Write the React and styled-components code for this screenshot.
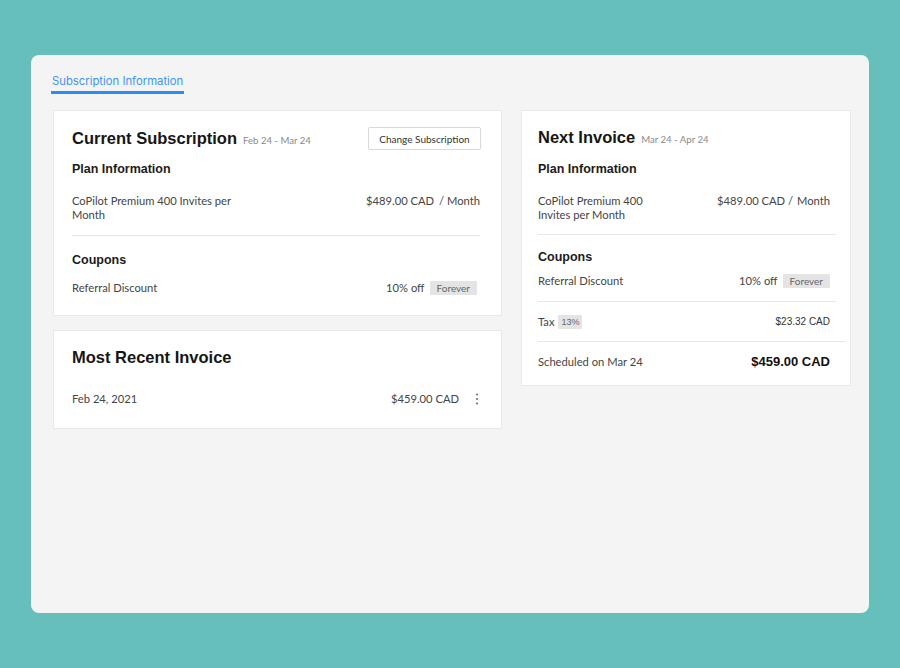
import React from "react";
import styled, { createGlobalStyle } from "styled-components";

const Global = createGlobalStyle`
  html, body { margin: 0; padding: 0; }
  body {
    background: #66bfba;
    font-family: Lato, "Open Sans", sans-serif;
    color: #3c3c3c;
    -webkit-font-smoothing: antialiased;
  }
`;

const Page = styled.div`
  width: 900px;
  height: 668px;
  box-sizing: border-box;
  padding: 55px 31px;
`;

const Panel = styled.div`
  height: 558px;
  box-sizing: border-box;
  background: #f4f4f4;
  border-radius: 8px;
  padding: 20px 18px 0 22px;
`;

const Tabs = styled.div`
  display: flex;
  margin-left: -2px;
  height: 20px;
`;

const Tab = styled.div`
  font-family: Inter, "Liberation Sans", Arial, sans-serif;
  font-size: 11.3px;
  color: #3d94f6;
  line-height: 13px;
  height: 16px;
  border-bottom: 3px solid #2a8cf6;
  padding: 0 1px;
`;

const Grid = styled.div`
  display: grid;
  grid-template-columns: 449px 330px;
  column-gap: 19px;
  align-items: start;
  margin-top: 15px;
`;

const Column = styled.div`
  display: flex;
  flex-direction: column;
  gap: 14px;
`;

const Card = styled.div`
  background: #fff;
  border: 1px solid #e9e9e9;
  box-sizing: border-box;
  padding: ${(p) => p.$pad};
`;

const Header = styled.div`
  display: flex;
  align-items: center;
  justify-content: space-between;
  height: ${(p) => p.$h || 23}px;
`;

const TitleGroup = styled.div`
  display: flex;
  align-items: baseline;
  gap: 6px;
`;

const Title = styled.h2`
  margin: 0;
  font-family: "Liberation Sans", Arial, sans-serif;
  font-weight: 700;
  font-size: 16.5px;
  color: #161616;
`;

const Dates = styled.span`
  font-size: 9.6px;
  color: #8a8a8a;
`;

const Button = styled.button`
  font-family: Lato, sans-serif;
  font-size: 10px;
  color: #333;
  background: #fff;
  border: 1px solid #d9d9d9;
  border-radius: 2px;
  height: 23px;
  width: 113px;
  padding: 0;
  margin-right: -1px;
`;

const Section = styled.h3`
  margin: ${(p) => p.$mt}px 0 0;
  font-family: "Liberation Sans", Arial, sans-serif;
  font-weight: 700;
  font-size: 12.5px;
  line-height: 16px;
  color: #1c1c1c;
`;

const Row = styled.div`
  display: flex;
  justify-content: space-between;
  align-items: ${(p) => p.$align || "center"};
  margin-top: ${(p) => p.$mt}px;
  font-size: 11.2px;
  line-height: 13.5px;
  color: #454545;
`;

const Desc = styled.div`
  max-width: ${(p) => p.$w}px;
`;

const Right = styled.div`
  display: flex;
  align-items: center;
  gap: ${(p) => p.$gap || 4}px;
  white-space: nowrap;
`;

const Badge = styled.span`
  background: #e4e4e4;
  color: #666;
  font-size: ${(p) => p.$fs || 10}px;
  line-height: 14px;
  padding: 0 ${(p) => p.$px || 6}px;
  margin-right: ${(p) => p.$mr || 0}px;
  border-radius: 1px;
  font-family: ${(p) => (p.$sans ? '"Liberation Sans", Arial, sans-serif' : "Lato, sans-serif")};
`;

const Divider = styled.hr`
  border: none;
  border-top: 1px solid #e6e6e6;
  margin: ${(p) => p.$mt}px ${(p) => p.$mr || 0}px 0 0;
`;

const SansVal = styled.span`
  font-family: "Liberation Sans", Arial, sans-serif;
  font-size: ${(p) => p.$fs || 10}px;
  font-weight: ${(p) => (p.$bold ? 700 : 400)};
  color: ${(p) => (p.$bold ? "#111" : "#333")};
`;

const Kebab = styled.svg`
  margin-left: 12px;
  margin-right: 1px;
`;

export default function App() {
  return (
    <>
      <Global />
      <Page>
        <Panel>
          <Tabs>
            <Tab>Subscription Information</Tab>
          </Tabs>
          <Grid>
            <Column>
              <Card $pad="16px 21px 20px 18px">
                <Header>
                  <TitleGroup>
                    <Title>Current Subscription</Title>
                    <Dates>Feb 24 - Mar 24</Dates>
                  </TitleGroup>
                  <Button>Change Subscription</Button>
                </Header>
                <Section $mt={11}>Plan Information</Section>
                <Row $mt={17} $align="flex-start">
                  <Desc $w={175}>CoPilot Premium 400 Invites per Month</Desc>
                  <Right $gap={5}>
                    <span>$489.00 CAD</span>
                    <span>/ Month</span>
                  </Right>
                </Row>
                <Divider $mt={14} />
                <Section $mt={16}>Coupons</Section>
                <Row $mt={13}>
                  <span>Referral Discount</span>
                  <Right $gap={5}>
                    <span>10% off</span>
                    <Badge $px={7} $mr={3}>Forever</Badge>
                  </Right>
                </Row>
              </Card>
              <Card $pad="15px 21px 22px 18px">
                <Header $h={22}>
                  <Title>Most Recent Invoice</Title>
                </Header>
                <Row $mt={24}>
                  <span>Feb 24, 2021</span>
                  <Right $gap={0}>
                    <span>$459.00 CAD</span>
                    <Kebab width="4" height="14" viewBox="0 0 4 14">
                      <circle cx="2" cy="2.5" r="1.1" fill="#777" />
                      <circle cx="2" cy="7" r="1.1" fill="#777" />
                      <circle cx="2" cy="11.5" r="1.1" fill="#777" />
                    </Kebab>
                  </Right>
                </Row>
              </Card>
            </Column>
            <Card $pad="15px 20px 16px 16px">
              <Header>
                <TitleGroup>
                  <Title>Next Invoice</Title>
                  <Dates>Mar 24 - Apr 24</Dates>
                </TitleGroup>
              </Header>
              <Section $mt={12}>Plan Information</Section>
              <Row $mt={17} $align="flex-start">
                <Desc $w={125}>CoPilot Premium 400 Invites per Month</Desc>
                <Right $gap={4}>
                  <span>$489.00 CAD /</span>
                  <span>Month</span>
                </Right>
              </Row>
              <Divider $mt={13} $mr={-6} />
              <Section $mt={14}>Coupons</Section>
              <Row $mt={9}>
                <span>Referral Discount</span>
                <Right $gap={5}>
                  <span>10% off</span>
                  <Badge $px={7}>Forever</Badge>
                </Right>
              </Row>
              <Divider $mt={13} $mr={-6} />
              <Row $mt={13}>
                <Right $gap={4}>
                  <span>Tax</span>
                  <Badge $sans $fs={9} $px={3}>13%</Badge>
                </Right>
                <SansVal>$23.32 CAD</SansVal>
              </Row>
              <Divider $mt={12} $mr={-15} />
              <Row $mt={13}>
                <span>Scheduled on Mar 24</span>
                <SansVal $bold $fs={13}>$459.00 CAD</SansVal>
              </Row>
            </Card>
          </Grid>
        </Panel>
      </Page>
    </>
  );
}
